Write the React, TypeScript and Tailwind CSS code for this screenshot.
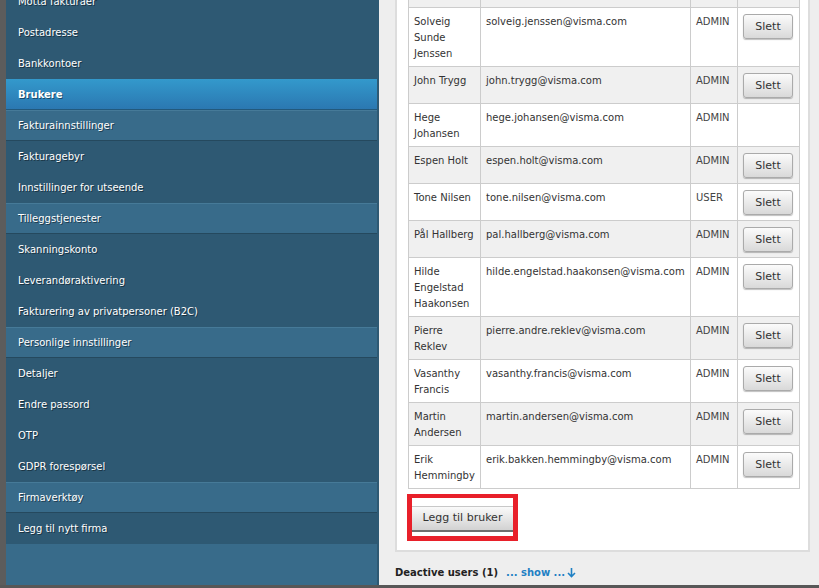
import React from "react";

interface User {
    name: string;
    email: string;
    role: string;
    canDelete: boolean;
}

const menu: { label: string; kind: "item" | "group" | "active" }[] = [
    { label: "Motta fakturaer", kind: "item" },
    { label: "Postadresse", kind: "item" },
    { label: "Bankkontoer", kind: "item" },
    { label: "Brukere", kind: "active" },
    { label: "Fakturainnstillinger", kind: "group" },
    { label: "Fakturagebyr", kind: "item" },
    { label: "Innstillinger for utseende", kind: "item" },
    { label: "Tilleggstjenester", kind: "group" },
    { label: "Skanningskonto", kind: "item" },
    { label: "Leverandøraktivering", kind: "item" },
    { label: "Fakturering av privatpersoner (B2C)", kind: "item" },
    { label: "Personlige innstillinger", kind: "group" },
    { label: "Detaljer", kind: "item" },
    { label: "Endre passord", kind: "item" },
    { label: "OTP", kind: "item" },
    { label: "GDPR forespørsel", kind: "item" },
    { label: "Firmaverktøy", kind: "group" },
    { label: "Legg til nytt firma", kind: "item" },
];

const users: User[] = [
    { name: "Solveig Sunde Jenssen", email: "solveig.jenssen@visma.com", role: "ADMIN", canDelete: true },
    { name: "John Trygg", email: "john.trygg@visma.com", role: "ADMIN", canDelete: true },
    { name: "Hege Johansen", email: "hege.johansen@visma.com", role: "ADMIN", canDelete: false },
    { name: "Espen Holt", email: "espen.holt@visma.com", role: "ADMIN", canDelete: true },
    { name: "Tone Nilsen", email: "tone.nilsen@visma.com", role: "USER", canDelete: true },
    { name: "Pål Hallberg", email: "pal.hallberg@visma.com", role: "ADMIN", canDelete: true },
    { name: "Hilde Engelstad Haakonsen", email: "hilde.engelstad.haakonsen@visma.com", role: "ADMIN", canDelete: true },
    { name: "Pierre Reklev", email: "pierre.andre.reklev@visma.com", role: "ADMIN", canDelete: true },
    { name: "Vasanthy Francis", email: "vasanthy.francis@visma.com", role: "ADMIN", canDelete: true },
    { name: "Martin Andersen", email: "martin.andersen@visma.com", role: "ADMIN", canDelete: true },
    { name: "Erik Hemmingby", email: "erik.bakken.hemmingby@visma.com", role: "ADMIN", canDelete: true },
];

const cell = "border border-[#cccccc] pl-[5px] pr-[3px] pt-[6px] pb-[4px] align-top";

const Sidebar: React.FC = () => (
    <div className="w-[374px] h-full bg-[#2e5973] flex flex-col">
        <div className="-mt-[14px] flex flex-col">
            {menu.map((m, i) => (
                <div
                    key={i}
                    className={`h-[31px] flex items-center pl-[12px] text-[10px] text-white [text-shadow:1px_1px_0_rgba(0,0,0,0.45)] ${
                        m.kind === "active"
                            ? "mr-[2px] font-bold bg-gradient-to-b from-[#3399cc] to-[#2b78b1] border-b border-[#22597c]"
                            : m.kind === "group"
                            ? "mr-[2px] bg-[#386b8a] border-t border-t-[#467a98] border-b border-b-[#25495e]"
                            : ""
                    }`}
                >
                    {m.label}
                </div>
            ))}
        </div>
        <div className="flex-1 mr-[2px] bg-[#386b8a]" />
    </div>
);

const App: React.FC = () => {
    return (
        <div
            className="w-[819px] h-[588px] overflow-hidden flex flex-col bg-[#575757]"
            style={{ fontFamily: '"DejaVu Sans", Verdana, sans-serif' }}
        >
            <div className="flex h-[585px]">
                <div className="w-[6px] bg-[#5c5c5c]" />
                <Sidebar />

                {/* Innhold */}
                <div className="flex-1 bg-[#eeeeee] flex flex-col">
                    <div className="ml-[16px] mr-[9px] -mt-[40px] bg-white border-2 border-[#dddddd] pl-[11px] pr-[8px] pt-[8px] pb-[9px]">
                        <table className="table-fixed border-collapse w-[391px] text-[10px] leading-[16px] text-[#333333]">
                            <thead>
                                <tr className="bg-[#f0f0f0] h-[37px]">
                                    <th className={`${cell} w-[72px]`} />
                                    <th className={`${cell} w-[210px]`} />
                                    <th className={`${cell} w-[47px]`} />
                                    <th className={`${cell} w-[62px]`} />
                                </tr>
                            </thead>
                            <tbody>
                                {users.map((u, i) => (
                                    <tr key={u.email} className={i % 2 === 1 ? "bg-[#f0f0f0]" : "bg-white"}>
                                        <td className={cell}>{u.name}</td>
                                        <td className={`${cell} whitespace-nowrap`}>{u.email}</td>
                                        <td className={`${cell} text-[#444444]`}>{u.role}</td>
                                        <td className={cell}>
                                            {u.canDelete && (
                                                <button className="block w-[50px] h-[25px] mb-[1px] rounded-[3px] border border-[#aaaaaa] bg-gradient-to-b from-[#fbfbfb] to-[#d9d9d9] shadow-[0_1px_1px_rgba(0,0,0,0.25)] text-[11px] text-[#333333]">
                                                    Slett
                                                </button>
                                            )}
                                        </td>
                                    </tr>
                                ))}
                            </tbody>
                        </table>

                        <div className="mt-[5px] -ml-[1px] w-[111px] border-[5px] border-t-[4px] border-[#e8202a] pt-[8px] pb-[4px]">
                            <button className="block w-full h-[26px] border-t border-t-[#c8c8c8] border-b-2 border-b-[#6e6e6e] bg-gradient-to-b from-[#fafafa] to-[#d2d2d2] text-[11px] text-[#333333]">
                                Legg til bruker
                            </button>
                        </div>
                    </div>

                    <div className="ml-[16px] mt-[13px] flex items-center text-[10px] font-bold">
                        <span className="text-[#222222]">Deactive users (1)</span>
                        <span className="ml-[8px] text-[#1f80c4]">... show ...</span>
                        <svg width="9" height="11" viewBox="0 0 9 11" className="ml-[2px] text-[#1f80c4]">
                            <path d="M4.5 1 V9.5 M1 6 L4.5 9.5 L8 6" fill="none" stroke="currentColor" strokeWidth="1.6" />
                        </svg>
                    </div>
                </div>
            </div>
        </div>
    );
};

export default App;
